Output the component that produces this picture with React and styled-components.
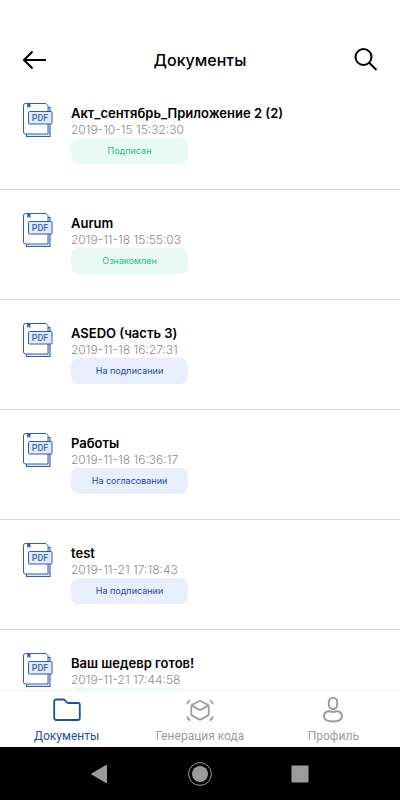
import React, { useState } from "react";
import styled, { createGlobalStyle } from "styled-components";

const documents = [
	{ title: "Акт_сентябрь_Приложение 2 (2)", date: "2019-10-15 15:32:30", status: "Подписан", done: true },
	{ title: "Aurum", date: "2019-11-18 15:55:03", status: "Ознакомлен", done: true },
	{ title: "ASEDO (часть 3)", date: "2019-11-18 16:27:31", status: "На подписании" },
	{ title: "Работы", date: "2019-11-18 16:36:17", status: "На согласовании" },
	{ title: "test", date: "2019-11-21 17:18:43", status: "На подписании" },
	{ title: "Ваш шедевр готов!", date: "2019-11-21 17:44:58", status: "Подписан", done: true }
];

const BackIcon = () => (
	<svg width="26" height="20" viewBox="0 0 26 20" fill="none" stroke="#000" strokeWidth="2">
		<path d="M25 10H3M11.5 1.5L3 10l8.500 8.500" />
	</svg>
);

const SearchIcon = () => (
	<svg width="24" height="24" viewBox="0 0 24 24" fill="none" stroke="#000" strokeWidth="2">
		<circle cx="9.5" cy="9" r="8" />
		<path d="M15.2 14.700L22.500 22" />
	</svg>
);

const PdfIcon = () => (
	<svg width="30" height="36" viewBox="0 0 30 36" fill="none" stroke="#2f5cab">
		<path d="M3.5 32v2.5h23.5V5.5h-2" fill="#dfe8fa" strokeWidth="1.1" />
		<path d="M2.5 1.5h20.500l2 2v28.500h-22.500a2 2 0 0 1-2-2v-26.500a2 2 0 0 1 2-2z" fill="#fff" />
		<path d="M4.5 1.5v4l1.3-1.3 1.3 1.3v-4z" fill="#2f5cab" strokeWidth="0.6" />
		<rect x="5.5" y="9.5" width="23.5" height="12.500" rx="1" fill="#e3ebfb" />
		<text
			x="17"
			y="19"
			textAnchor="middle"
			fontFamily="Roboto, sans-serif"
			fontSize="9"
			fontWeight="500"
			fill="#3f68b5"
			stroke="none"
		>
			PDF
		</text>
	</svg>
);

const FolderIcon = () => (
	<svg width="28" height="28" viewBox="0 0 28 28" fill="none" stroke="currentColor" strokeWidth="1.8">
		<path d="M3.2 3.500h7.200c.7 0 1.200.3 1.600.8l1.600 2c.4.5.9.7 1.600.7h9.600a2 2 0 0 1 2 2V22a2 2 0 0 1-2 2H3.200a2 2 0 0 1-2-2V5.500a2 2 0 0 1 2-2z" />
	</svg>
);

const CubeIcon = () => (
	<svg width="28" height="28" viewBox="0 0 28 28" fill="none" stroke="currentColor" strokeWidth="1.8">
		<path
			strokeLinejoin="round"
			d="M13 5.200a2 2 0 0 1 2 0l6.700 3.600a1.800 1.800 0 0 1 1 1.600v7.600a1.800 1.800 0 0 1-1 1.600l-6.700 3.800a2 2 0 0 1-2 0l-6.700-3.800a1.800 1.800 0 0 1-1-1.600v-7.600a1.800 1.800 0 0 1 1-1.600z"
		/>
		<path d="M5.800 9.600l7.200 4a2 2 0 0 0 2 0l7.200-4" />
		<path d="M1.200 8c.3-1.900 1.400-3.200 3.200-4M26.800 8c-.3-1.900-1.400-3.200-3.200-4M1.200 20.500c.3 1.900 1.400 3.200 3.200 4M26.800 20.500c-.3 1.900-1.400 3.200-3.200 4" />
	</svg>
);

const ProfileIcon = () => (
	<svg width="28" height="28" viewBox="0 0 28 28" fill="none" stroke="currentColor" strokeWidth="2">
		<rect x="9.8" y="1.8" width="8.4" height="11.2" rx="4.2" />
		<path d="M9.5 15.2c1.500-.4 2.600.8 4.500.8s3-1.200 4.500-.8c2.800.7 4.500 2.500 4.500 4.800 0 3.500-3.500 5.500-9 5.500s-9-2-9-5.500c0-2.300 1.700-4.100 4.500-4.800z" />
	</svg>
);

const tabs = [
	{ id: "docs", label: "Документы", Icon: FolderIcon },
	{ id: "code", label: "Генерация кода", Icon: CubeIcon },
	{ id: "profile", label: "Профиль", Icon: ProfileIcon }
];

const App = () => {
	const [activeTab, setActiveTab] = useState("docs");

	return (
		<Screen>
			<GlobalStyle />
			<Header>
				<IconButton type="button" aria-label="Назад">
					<BackIcon />
				</IconButton>
				<Title>Документы</Title>
				<IconButton type="button" aria-label="Поиск">
					<SearchIcon />
				</IconButton>
			</Header>
			<DocumentList>
				{documents.map(doc => (
					<DocumentRow key={doc.date}>
						<PdfIcon />
						<Details>
							<Name>{doc.title}</Name>
							<DateText>{doc.date}</DateText>
							<Status $done={doc.done}>{doc.status}</Status>
						</Details>
					</DocumentRow>
				))}
			</DocumentList>
			<TabBar>
				{tabs.map(({ id, label, Icon }) => (
					<Tab
						key={id}
						type="button"
						$active={id === activeTab}
						onClick={() => setActiveTab(id)}
					>
						<Icon />
						{label}
					</Tab>
				))}
			</TabBar>
			<SystemBar>
				<SystemButton type="button" aria-label="Back">
					<svg width="24" height="24" viewBox="0 0 24 24">
						<path d="M19 3.5v17a.6.6 0 0 1-1 .4L3.5 12.5a.6.6 0 0 1 0-1L18 3.1a.6.6 0 0 1 1 .4z" fill="#9b9b9b" />
					</svg>
				</SystemButton>
				<SystemButton type="button" aria-label="Home">
					<svg width="24" height="24" viewBox="0 0 24 24">
						<circle cx="12" cy="12" r="11.4" fill="none" stroke="#9b9b9b" />
						<circle cx="12" cy="12" r="8" fill="#9b9b9b" />
					</svg>
				</SystemButton>
				<SystemButton type="button" aria-label="Recent">
					<svg width="24" height="24" viewBox="0 0 24 24">
						<rect x="3.5" y="3.5" width="17" height="17" rx="1" fill="#9b9b9b" />
					</svg>
				</SystemButton>
			</SystemBar>
		</Screen>
	);
};

export default App;

/////////////////////////////////

const GlobalStyle = createGlobalStyle`
	* {
		box-sizing: border-box;
	}
	body {
		margin: 0;
		background: #fff;
		font-family: Inter, sans-serif;
	}
	svg {
		display: block;
		flex-shrink: 0;
	}
`;

const Button = styled.button`
	display: flex;
	align-items: center;
	justify-content: center;
	border: none;
	padding: 0;
	background: none;
	cursor: pointer;
`;

const Screen = styled.div`
	display: flex;
	flex-direction: column;
	height: 100vh;
`;

const Header = styled.header`
	display: flex;
	align-items: center;
	justify-content: space-between;
	padding: 40px 20px 0;
`;

const IconButton = styled(Button)`
	width: 28px;
	height: 40px;
`;

const Title = styled.h1`
	margin: 0;
	font-size: 16px;
	font-weight: 500;
	line-height: 20px;
	color: #000;
`;

const DocumentList = styled.ul`
	flex: 1;
	min-height: 0;
	margin: 0;
	padding: 0;
	list-style: none;
	overflow-y: auto;
	scrollbar-width: none;
`;

const DocumentRow = styled.li`
	display: flex;
	gap: 18px;
	padding: 22px 23px 25px;
	border-bottom: 1px solid #d8d8d8;
`;

const Details = styled.div`
	display: flex;
	flex-direction: column;
	align-items: flex-start;
`;

const Name = styled.span`
	padding-top: 2px;
	font-size: 13px;
	font-weight: 600;
	line-height: 18px;
	color: #000;
`;

const DateText = styled.time`
	font-size: 12px;
	font-weight: 300;
	line-height: 16px;
	color: #8c8c8c;
`;

const Status = styled.span`
	width: 117px;
	border-radius: 8px;
	font-size: 9px;
	line-height: 26px;
	text-align: center;
	color: ${props => (props.$done ? "#2fb685" : "#23489c")};
	background: ${props => (props.$done ? "#e9f9f3" : "#e8eefc")};
`;

const TabBar = styled.nav`
	display: grid;
	grid-template-columns: repeat(3, 1fr);
	border-top: 1px solid #f1f3f5;
	background: #fff;
`;

const Tab = styled(Button)`
	flex-direction: column;
	gap: 4px;
	padding: 5px 0 3px;
	font-family: Roboto, sans-serif;
	font-size: 12px;
	line-height: 16px;
	color: ${props => (props.$active ? "#1d4fa3" : "#9c9c9c")};
`;

const SystemBar = styled.div`
	display: flex;
	align-items: center;
	justify-content: center;
	gap: 76px;
	height: 53px;
	background: #000;
`;

const SystemButton = styled(Button)`
	width: 24px;
`;
